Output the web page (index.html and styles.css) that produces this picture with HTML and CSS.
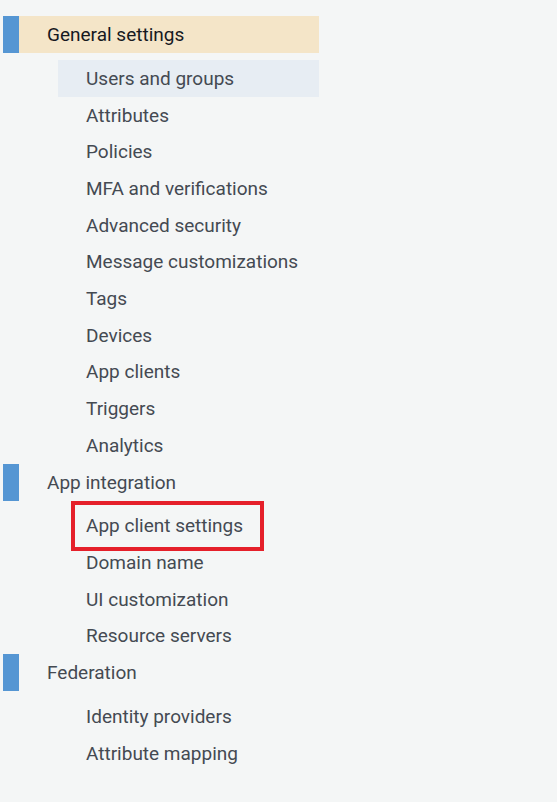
FILE: index.html
```html
<!DOCTYPE html>
<html>
<head>
<meta charset="utf-8">
<link rel="stylesheet" href="styles.css">
</head>
<body>
<nav class="nav">
  <div class="group">
    <div class="heading active">General settings</div>
    <ul class="items">
      <li class="item selected">Users and groups</li>
      <li class="item">Attributes</li>
      <li class="item">Policies</li>
      <li class="item">MFA and verifications</li>
      <li class="item">Advanced security</li>
      <li class="item">Message customizations</li>
      <li class="item">Tags</li>
      <li class="item">Devices</li>
      <li class="item">App clients</li>
      <li class="item">Triggers</li>
      <li class="item">Analytics</li>
    </ul>
  </div>
  <div class="group">
    <div class="heading">App integration</div>
    <ul class="items">
      <li class="item highlighted">App client settings</li>
      <li class="item">Domain name</li>
      <li class="item">UI customization</li>
      <li class="item">Resource servers</li>
    </ul>
  </div>
  <div class="group">
    <div class="heading">Federation</div>
    <ul class="items">
      <li class="item">Identity providers</li>
      <li class="item">Attribute mapping</li>
    </ul>
  </div>
</nav>
</body>
</html>
```
FILE: styles.css
```css
html, body {
  margin: 0;
  padding: 0;
  background: #f4f6f6;
}
body {
  font-family: Roboto, "Liberation Sans", sans-serif;
  font-size: 19px;
  color: #444a52;
  height: 802px;
}
.nav {
  padding: 16px 0 0 3px;
  width: 316px;
}
.heading {
  height: 37px;
  display: flex;
  align-items: center;
  padding-left: 44px;
  position: relative;
  color: #444a52;
}
.heading::before {
  content: "";
  position: absolute;
  left: 0;
  top: 0;
  width: 16px;
  height: 37px;
  background: #5596d3;
}
.heading.active {
  background: #f4e5c8;
  color: #16191f;
}
.items {
  list-style: none;
  margin: 7px 0 0 0;
  padding: 0 0 0 55px;
}
.item {
  height: 36.7px;
  display: flex;
  align-items: center;
  padding-left: 28px;
  position: relative;
}
.item.selected {
  background: #e7edf3;
}
.item.highlighted::after {
  content: "";
  position: absolute;
  left: 13px;
  top: -7px;
  width: 185px;
  height: 42px;
  border: 4px solid #e5202a;
}
```
